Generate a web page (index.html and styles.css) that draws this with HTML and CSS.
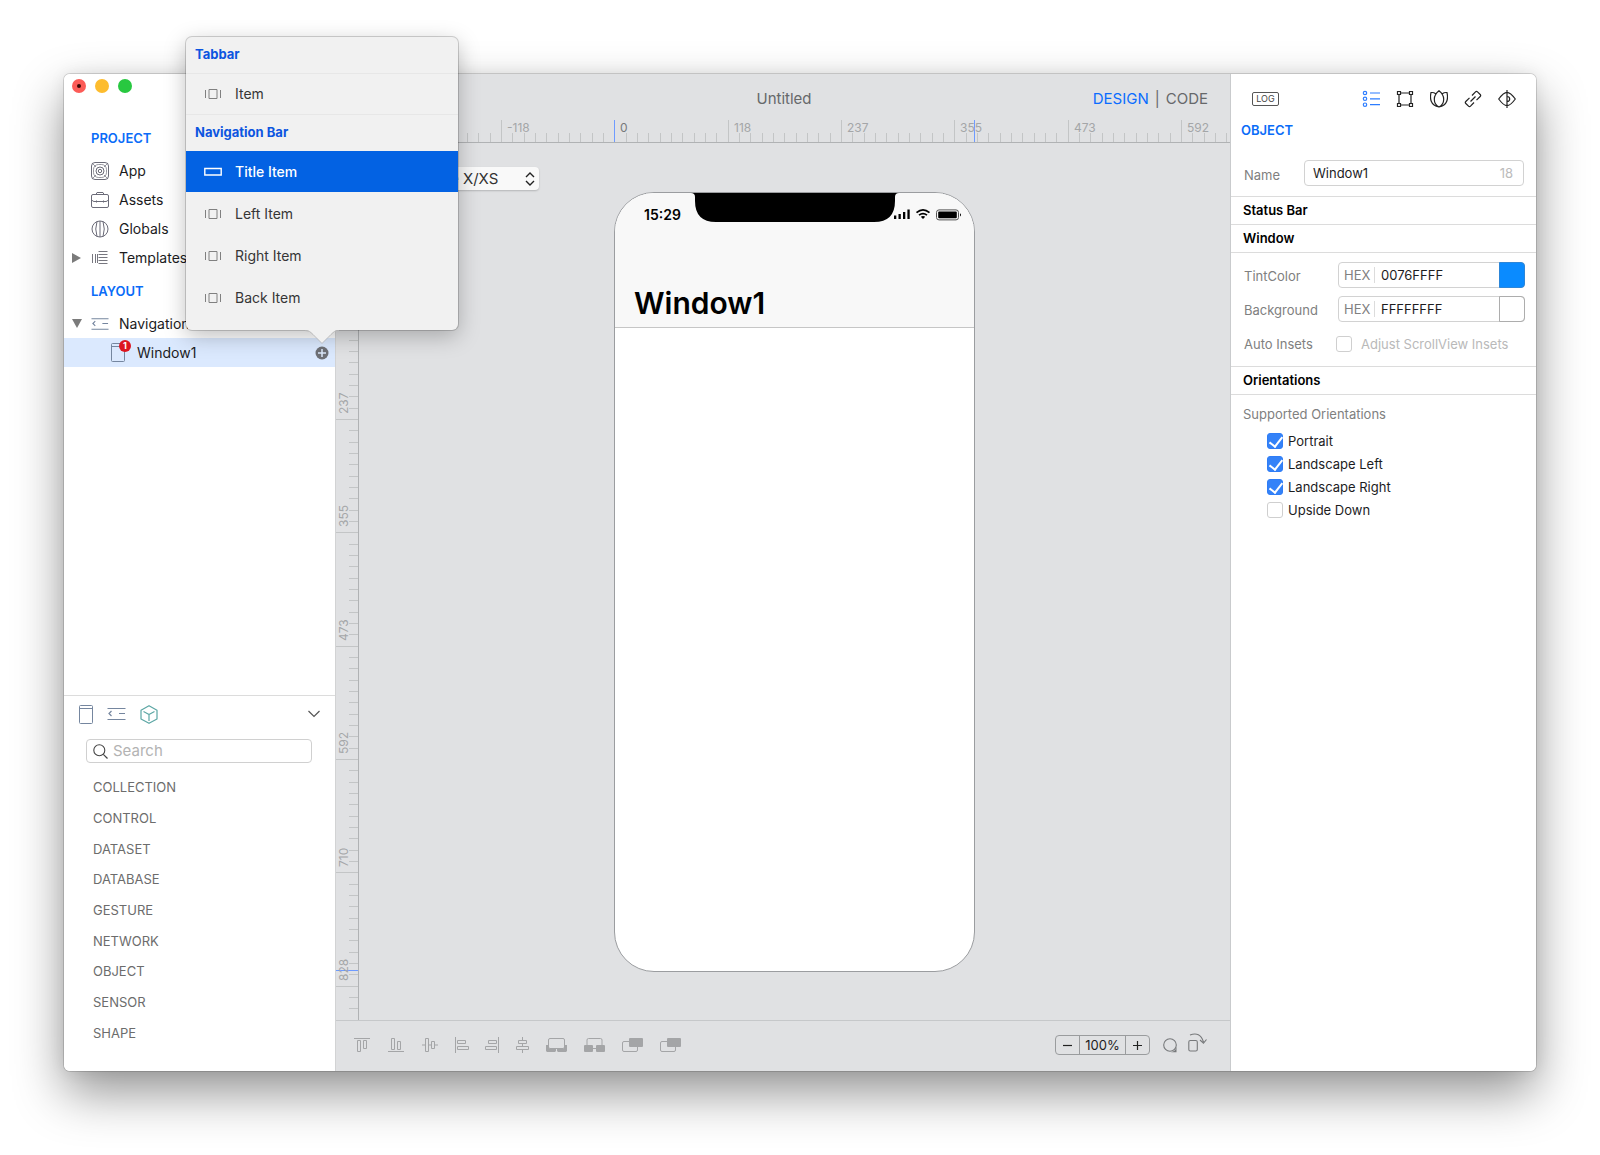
FILE: index.html
```html
<!DOCTYPE html>
<html lang="en">
<head>
<meta charset="utf-8">
<title>Untitled</title>
<link rel="stylesheet" href="styles.css">
</head>
<body>
<svg class="defs" width="0" height="0" aria-hidden="true">
  <defs>
    <symbol id="i-item" viewBox="0 0 18 12"><path d="M1.500 2v8M16.500 2v8M5 1.500h8v9H5z" fill="none" stroke="currentColor"/></symbol>
    <symbol id="i-nav" viewBox="0 0 19 14"><path d="M.5 1.500h18M.5 12.500h18M4.500 4L2 6.500l2.500 2.500M12 6.500h6" fill="none" stroke="currentColor" stroke-width="1.200"/></symbol>
    <symbol id="i-window" viewBox="0 0 14 19"><path d="M.5 1.500q0-1 1-1h11q1 0 1 1v16q0 1-1 1h-11q-1 0-1-1zM.5 3.500h13" fill="none" stroke="currentColor"/></symbol>
  </defs>
</svg>

<main class="app">
  <aside class="sidebar">
    <div class="lights">
      <button class="light light-close" aria-label="Close"></button>
      <button class="light light-min" aria-label="Minimize"></button>
      <button class="light light-max" aria-label="Zoom"></button>
    </div>

    <nav class="tree">
      <h2 class="heading">PROJECT</h2>
      <ul class="rows rows-project">
        <li class="row"><span class="arrow"></span>
          <svg class="row-icon" viewBox="0 0 18 18"><g fill="none" stroke="#6b6b78"><rect x=".5" y=".5" width="17" height="17" rx="3.500"/><rect x="2.500" y="2.500" width="13" height="13" rx="5" stroke-width=".7"/><circle cx="9" cy="9" r="4"/><circle cx="9" cy="9" r="1.700"/><path d="M1 1l4 4M17 1l-4 4M1 17l4-4M17 17l-4-4" stroke-width=".7"/></g></svg>
          <span>App</span></li>
        <li class="row"><span class="arrow"></span>
          <svg class="row-icon" viewBox="0 0 18 18"><g fill="none" stroke="#6b6b78"><rect x=".5" y="3.500" width="17" height="13" rx="1.500"/><path d="M5 3.500L6 1.500h6l1 2M.5 8.500q1 2 2.500 2h12q1.500 0 2.500-2M5.500 9.500v2M12.500 9.500v2"/></g></svg>
          <span>Assets</span></li>
        <li class="row"><span class="arrow"></span>
          <svg class="row-icon" viewBox="0 0 18 18"><g fill="none" stroke="#6b6b78"><circle cx="9" cy="9" r="8"/><path d="M9 1v16M6 1.500q-2.500 7.500 0 15M12 1.500q2.500 7.500 0 15"/></g></svg>
          <span>Globals</span></li>
        <li class="row"><span class="arrow"><svg width="9" height="10" viewBox="0 0 9 10"><path d="M0 0l9 5-9 5z" fill="#7b7b7b"/></svg></span>
          <svg class="row-icon" viewBox="0 0 18 18"><path d="M1.500 5v9M4.500 5v9M7.500 2.500h9M7.500 5.500h9M7.500 8.500h9M7.500 11.500h9M7.500 14.500h9M6.500 5v9" fill="none" stroke="#77777f"/></svg>
          <span>Templates</span></li>
      </ul>
      <h2 class="heading heading-layout">LAYOUT</h2>
      <ul class="rows">
        <li class="row"><span class="arrow"><svg width="10" height="9" viewBox="0 0 10 9"><path d="M0 0h10L5 9z" fill="#7b7b7b"/></svg></span>
          <svg class="row-icon slate" viewBox="0 0 19 18"><use href="#i-nav" y="2" width="19" height="14"/></svg>
          <span>Navigation</span></li>
        <li class="row row-child selected">
          <span class="badge-host"><svg class="slate" width="14" height="19"><use href="#i-window" width="14" height="19"/></svg><span class="badge">1</span></span>
          <span>Window1</span>
          <button class="add" aria-label="Add item"><svg width="14" height="14" viewBox="0 0 14 14"><circle cx="7" cy="7" r="6.500" fill="#6e7076"/><path d="M7 3v8M3 7h8" stroke="#dde9fc" stroke-width="1.500"/></svg></button>
          <div class="popover">
            <h3 class="pop-heading">Tabbar</h3>
            <button class="pop-item pop-ruled"><svg width="18" height="12"><use href="#i-item"/></svg>Item</button>
            <h3 class="pop-heading">Navigation Bar</h3>
            <button class="pop-item active"><svg width="18" height="12" viewBox="0 0 18 12"><path d="M.8 2.500h16.400v6.500H.8z" fill="none" stroke="#fff" stroke-width="1.400"/></svg>Title Item</button>
            <button class="pop-item"><svg width="18" height="12"><use href="#i-item"/></svg>Left Item</button>
            <button class="pop-item"><svg width="18" height="12"><use href="#i-item"/></svg>Right Item</button>
            <button class="pop-item"><svg width="18" height="12"><use href="#i-item"/></svg>Back Item</button>
            <svg class="pop-arrow" width="34" height="15" viewBox="0 0 34 15"><path d="M0 0v1q5 0 8 4l9 9 9-9q3-4 8-4V0z" fill="#f1f1f1"/><path d="M0 1.500q5 0 8 4l9 9 9-9q3-4 8-4" fill="none" stroke="#b9b9b9" stroke-width=".8"/></svg>
          </div>
        </li>
      </ul>
    </nav>

    <section class="library">
      <div class="lib-tabs">
        <button class="slate" aria-label="Windows"><svg width="14" height="19"><use href="#i-window"/></svg></button>
        <button class="slate" aria-label="Navigation"><svg width="19" height="14"><use href="#i-nav"/></svg></button>
        <button aria-label="Objects"><svg width="18" height="19" viewBox="0 0 18 19"><path d="M9 .7l8 4.500v8.800l-8 4.300-8-4.300V5.200zM3.500 6.500L9 9.500l5.500-3M9 9.500V16" fill="none" stroke="#5ba6a4" stroke-width="1.200" stroke-linejoin="round"/></svg></button>
        <button class="lib-toggle" aria-label="Collapse"><svg width="12" height="8" viewBox="0 0 12 8"><path d="M.5 1L6 6.500 11.500 1" fill="none" stroke="#555" stroke-width="1.200"/></svg></button>
      </div>
      <label class="search"><svg width="15" height="15" viewBox="0 0 15 15"><circle cx="6.300" cy="6.300" r="5.500" fill="none" stroke="#444" stroke-width="1.100"/><path d="M10.300 10.300l4.200 4.200" stroke="#444" stroke-width="1.200"/></svg>
        <input type="search" placeholder="Search" aria-label="Search"></label>
      <ul class="categories">
        <li>COLLECTION</li><li>CONTROL</li><li>DATASET</li><li>DATABASE</li><li>GESTURE</li><li>NETWORK</li><li>OBJECT</li><li>SENSOR</li><li>SHAPE</li>
      </ul>
    </section>
  </aside>

  <section class="editor">
    <header class="titlebar">
      <span></span>
      <h1 class="doc-title">Untitled</h1>
      <div class="modes"><a class="mode on" href="#design">DESIGN</a><span>|</span><a class="mode" href="#code">CODE</a></div>
    </header>
    <div class="ruler-h">
      <svg class="ticks" aria-hidden="true">
        <pattern id="ph" x="278" y="0" width="340" height="22" patternUnits="userSpaceOnUse"><path fill="#c3c5c6" d="M0 0h1v22h-1zM12 13h1v9h-1zM23 13h1v9h-1zM34 13h1v9h-1zM46 13h1v9h-1zM57 13h1v9h-1zM68 13h1v9h-1zM80 13h1v9h-1zM91 13h1v9h-1zM102 13h1v9h-1zM114 0h1v22h-1zM125 13h1v9h-1zM136 13h1v9h-1zM148 13h1v9h-1zM159 13h1v9h-1zM170 13h1v9h-1zM182 13h1v9h-1zM193 13h1v9h-1zM204 13h1v9h-1zM216 13h1v9h-1zM227 0h1v22h-1zM238 13h1v9h-1zM250 13h1v9h-1zM261 13h1v9h-1zM272 13h1v9h-1zM284 13h1v9h-1zM295 13h1v9h-1zM306 13h1v9h-1zM318 13h1v9h-1zM329 13h1v9h-1z"/></pattern>
        <rect width="100%" height="22" fill="url(#ph)"/>
        <path d="M278 0h1v22h-1zM638 0h1v22h-1z" fill="#6f9bff"/>
      </svg>
      <div class="labels-h"><span>-118</span><span class="origin">0</span><span>118</span><span>237</span><span>355</span><span>473</span><span>592</span></div>
    </div>
    <div class="stage">
      <div class="ruler-v">
        <svg class="ticks" aria-hidden="true">
          <pattern id="pv" x="0" y="49" width="22" height="340" patternUnits="userSpaceOnUse"><path fill="#c3c5c6" d="M0 0v1h22v-1zM13 12v1h9v-1zM13 23v1h9v-1zM13 34v1h9v-1zM13 46v1h9v-1zM13 57v1h9v-1zM13 68v1h9v-1zM13 80v1h9v-1zM13 91v1h9v-1zM13 102v1h9v-1zM0 114v1h22v-1zM13 125v1h9v-1zM13 136v1h9v-1zM13 148v1h9v-1zM13 159v1h9v-1zM13 170v1h9v-1zM13 182v1h9v-1zM13 193v1h9v-1zM13 204v1h9v-1zM13 216v1h9v-1zM0 227v1h22v-1zM13 238v1h9v-1zM13 250v1h9v-1zM13 261v1h9v-1zM13 272v1h9v-1zM13 284v1h9v-1zM13 295v1h9v-1zM13 306v1h9v-1zM13 318v1h9v-1zM13 329v1h9v-1z"/></pattern>
          <rect width="22" height="100%" fill="url(#pv)"/>
          <path d="M0 827h22v1H0z" fill="#6f9bff"/>
        </svg>
        <div class="labels-v"><span>237</span><span>355</span><span>473</span><span>592</span><span>710</span><span>828</span></div>
      </div>
      <div class="canvas">
        <div class="device">
          <select aria-label="Device"><option>iPhone X/XS</option></select>
          <svg width="10" height="14" viewBox="0 0 10 14"><path d="M1 5l4-4 4 4M1 9l4 4 4-4" fill="none" stroke="#222" stroke-width="1.400"/></svg>
        </div>
        <div class="phone">
          <div class="navbar">
            <div class="status">
              <span class="clock">15:29</span>
              <svg class="notch" width="208" height="30" viewBox="0 0 208 30"><path d="M0 0h208q-4 0-4 4v4q0 21-21 21H25Q4 29 4 8V4q0-4-4-4z"/></svg>
              <svg class="signals" width="68" height="12" viewBox="0 0 68 12"><path d="M0 6.500h2.300V10H0zM4.500 5h2.300v5H4.500zM9 3h2.300v7H9zM13.400.5h2.300V10h-2.300z"/><path d="M22.500 3.700q6.500-5.500 13 0M25 6.200q4-3.200 8 0" fill="none" stroke="#000" stroke-width="1.700"/><path d="M26.800 7.800q2.200-1.600 4.400 0L29 10z"/><rect x="42.500" y=".9" width="22" height="10" rx="2.500" fill="none" stroke="#555"/><rect x="44.200" y="2.600" width="18.600" height="6.600" rx="1"/><path d="M66 4.200q2 1.600 0 3.200z"/></svg>
            </div>
            <p class="big-title">Window1</p>
          </div>
        </div>
      </div>
    </div>
    <footer class="footer">
      <div class="tools">
        <div class="tool-group g1">
          <button aria-label="Align top"><svg viewBox="0 0 16 16"><path d="M0 1.500h16M3.500 3.500h3v11h-3zM9.500 3.500h3v8h-3z"/></svg></button>
          <button aria-label="Align bottom"><svg viewBox="0 0 16 16"><path d="M0 14.500h16M3.500 1.500h3v11h-3zM9.500 4.500h3v8h-3z"/></svg></button>
          <button aria-label="Align middle"><svg viewBox="0 0 16 16"><path d="M0 8h3.500M6.500 8h3M12.500 8H16M3.500 1.500h3v13h-3zM9.500 4.500h3v7h-3z"/></svg></button>
        </div>
        <div class="tool-group g2">
          <button aria-label="Align left"><svg viewBox="0 0 16 16"><path d="M1.500 0v16M3.500 3.500h8v3h-8zM3.500 9.500h11v3h-11z"/></svg></button>
          <button aria-label="Align right"><svg viewBox="0 0 16 16"><path d="M14.500 0v16M4.500 3.500h8v3h-8zM1.500 9.500h11v3h-11z"/></svg></button>
          <button aria-label="Align center"><svg viewBox="0 0 16 16"><path d="M8.500 0v3.500M8.500 6.500v3M8.500 12.500V16M4.500 3.500h8v3h-8zM2.500 9.500h12v3h-12z"/></svg></button>
        </div>
        <div class="tool-group g3">
          <button aria-label="Bring to front"><svg viewBox="0 0 21 16"><path class="solid" d="M0 8h3v4h7v2l-1 1H1l-1-1zM21 8h-3v4h-7v2l1 1h8l1-1z"/><rect x="2.500" y="1.500" width="16" height="10" rx="1.500"/></svg></button>
          <button aria-label="Send to back"><svg viewBox="0 0 21 16"><path d="M3 8V3q0-1.500 1.500-1.500h12Q18 1.500 18 3v5M9 11.500h3"/><rect class="solid" y="8" width="9" height="7" rx="1"/><rect class="solid" x="12" y="8" width="9" height="7" rx="1"/></svg></button>
          <button aria-label="Bring forward"><svg viewBox="0 0 21 16"><rect x=".5" y="4.500" width="15" height="10" rx="1.500"/><rect class="solid" x="7" y="1" width="14" height="9" rx="1"/></svg></button>
          <button aria-label="Send backward"><svg viewBox="0 0 21 16"><rect x=".5" y="4.500" width="15" height="10" rx="1.500"/><rect class="solid" x="7" y="1" width="14" height="9" rx="1"/></svg></button>
        </div>
      </div>
      <div class="zoom">
        <button aria-label="Zoom out"><svg width="9" height="9"><path d="M0 4.500h9" stroke="#222" stroke-width="1.200"/></svg></button>
        <output>100%</output>
        <button aria-label="Zoom in"><svg width="9" height="9"><path d="M0 4.500h9M4.500 0v9" stroke="#222" stroke-width="1.200"/></svg></button>
      </div>
      <button class="foot-btn" aria-label="Appearance"><svg width="15" height="15" viewBox="0 0 15 15"><circle cx="7" cy="7" r="6.300" fill="none" stroke="#77797b" stroke-width="1.100"/><path d="M13.500 9v5.200H8q4.500-.7 5.500-5.200z" fill="#77797b"/></svg></button>
      <button class="foot-btn" aria-label="Rotate device"><svg width="20" height="20" viewBox="0 0 20 20"><g fill="none" stroke="#77797b" stroke-width="1.100"><rect x=".8" y="8.500" width="8.500" height="10.500" rx="1.500"/><path d="M2 3Q12-1 15.500 10M12 8l3.500 3.200L18.500 7.500"/></g></svg></button>
    </footer>
  </section>

  <aside class="inspector">
    <div class="insp-bar">
      <button class="log">LOG</button>
      <div class="insp-tabs">
        <button class="insp-tab on" aria-label="Attributes"><svg viewBox="0 0 18 18"><circle cx="3" cy="3" r="1.700"/><circle cx="3" cy="8.800" r="1.700"/><circle cx="3" cy="14.700" r="1.700"/><path d="M8 3h10M8 8.800h10M8 14.700h10"/></svg></button>
        <button class="insp-tab" aria-label="Layout"><svg viewBox="0 0 18 18"><path d="M1.500 1.500h3v3h-3zM13.500 1.500h3v3h-3zM1.500 13.500h3v3h-3zM13.500 13.500h3v3h-3zM4.500 3h9M4.500 15h9M3 4.500v9M15 4.500v9"/></svg></button>
        <button class="insp-tab" aria-label="Style"><svg viewBox="0 0 18 18"><path d="M9 .8C5.500 3.500 4.300 6.500 4.300 9.300S6 15.500 9 17c3-1.500 4.700-4.900 4.700-7.700S12.500 3.500 9 .8zM5.700 3.700Q3.500 2.200 1 2.600C-.2 8 .2 15.500 9 17M12.300 3.700Q14.500 2.200 17 2.600C18.200 8 17.800 15.500 9 17"/></svg></button>
        <button class="insp-tab" aria-label="Connections"><svg viewBox="0 0 18 18"><path d="M8 5.500l3.500-3.700q1-1 2 0l2.700 2.700q1 1 0 2L12.500 10.200M10 12.500l-3.500 3.700q-1 1-2 0L1.800 13.500q-1-1 0-2L5.500 7.800M6.500 11.500l5-5"/></svg></button>
        <button class="insp-tab" aria-label="Preview"><svg viewBox="0 0 18 18"><path d="M.7 9C4 4.500 6.500 2.300 9 2.300S14 4.500 17.300 9C14 13.500 11.500 15.700 9 15.700S4 13.500.7 9zM9 0v18M9 6.500q2.700 0 2.700 2.500T9 11.500"/></svg></button>
      </div>
    </div>
    <h2 class="heading insp-heading">OBJECT</h2>
    <div class="field name-field">
      <label for="obj-name">Name</label>
      <div class="box"><input id="obj-name" type="text" value="Window1"><span class="count">18</span></div>
    </div>
    <h3 class="group">Status Bar</h3>
    <h3 class="group">Window</h3>
    <div class="form">
      <div class="field">
        <label for="tint">TintColor</label>
        <div class="box color"><span class="hex">HEX</span><input id="tint" type="text" value="0076FFFF"><button class="swatch swatch-tint" aria-label="Pick tint color"></button></div>
      </div>
      <div class="field">
        <label for="bg">Background</label>
        <div class="box color"><span class="hex">HEX</span><input id="bg" type="text" value="FFFFFFFF"><button class="swatch" aria-label="Pick background color"></button></div>
      </div>
      <div class="field insets">
        <span>Auto Insets</span>
        <label class="check muted"><input type="checkbox" disabled>Adjust ScrollView Insets</label>
      </div>
    </div>
    <h3 class="group">Orientations</h3>
    <fieldset class="orients">
      <legend>Supported Orientations</legend>
      <label class="check"><input type="checkbox" checked>Portrait</label>
      <label class="check"><input type="checkbox" checked>Landscape Left</label>
      <label class="check"><input type="checkbox" checked>Landscape Right</label>
      <label class="check"><input type="checkbox">Upside Down</label>
    </fieldset>
  </aside>
</main>
</body>
</html>
```
FILE: styles.css
```css
* { box-sizing: border-box; }

body {
  margin: 0;
  min-height: 100vh;
  padding: 74px 64px 84px;
  display: flex;
  background: #fff;
  font-family: Inter, "Liberation Sans", sans-serif;
  font-size: 13px;
  line-height: 16px;
  color: #1c1c1e;
}

h1, h2, h3, p, ul, fieldset { margin: 0; padding: 0; border: 0; font-size: inherit; }
ul { list-style: none; }
button, input, select, output { font: inherit; color: inherit; }
button { padding: 0; border: 0; background: none; display: flex; align-items: center; justify-content: center; }
input { min-width: 0; padding: 0; border: 0; outline: 0; background: none; }
a { color: inherit; text-decoration: none; }
svg { display: block; flex: none; }
.defs { position: absolute; }
.slate { color: #75869f; }

.app {
  flex: 1;
  display: grid;
  grid-template-columns: 272px 1fr 306px;
  border-radius: 6px;
  box-shadow: 0 0 0 1px rgba(0, 0, 0, .14), 0 22px 50px rgba(0, 0, 0, .42), 0 0 16px rgba(0, 0, 0, .08);
}

/* Sidebar */
.sidebar {
  display: flex;
  flex-direction: column;
  background: #fff;
  border-right: 1px solid #d2d3d4;
  border-radius: 6px 0 0 6px;
}
.lights { display: flex; gap: 9px; padding: 5px 8px; height: 56px; }
.light { width: 14px; height: 14px; border-radius: 50%; }
.light-close { background: #fc5b57; }
.light-close::after { content: ""; width: 4px; height: 4px; border-radius: 50%; background: #3a0805; }
.light-min { background: #fdbc2e; }
.light-max { background: #28c840; }

.tree { flex: 1; }
.heading { padding-left: 27px; font-weight: 600; color: #0a6cf8; }
.rows { padding-top: 10px; font-size: 14px; }
.rows-project { height: 127px; display: grid; align-content: space-between; }
.heading-layout { padding-top: 10px; }
.row { height: 29px; display: flex; align-items: center; gap: 10px; }
.arrow { width: 27px; margin-right: -10px; padding-left: 8px; display: flex; }
.row-icon { width: 18px; height: 18px; }
.row-child { position: relative; padding: 0 6px 0 47px; gap: 12px; }
.selected { background: #dbe9fe; }
.badge-host { position: relative; }
.badge {
  position: absolute;
  top: -3px;
  right: -6px;
  width: 12px;
  height: 12px;
  border-radius: 50%;
  background: #dd1620;
  color: #fff;
  font-size: 9px;
  line-height: 12px;
  font-weight: 700;
  text-align: center;
}
.add { margin-left: auto; }

.popover {
  position: absolute;
  left: 122px;
  bottom: 37px;
  z-index: 2;
  width: 272px;
  padding-bottom: 11px;
  background: #f1f1f1;
  border-radius: 6px;
  box-shadow: 0 0 0 1px rgba(0, 0, 0, .17), 0 6px 22px rgba(0, 0, 0, .26);
}
.pop-heading { height: 36px; padding: 9px; font-size: 13px; font-weight: 700; color: #0c55e0; }
.pop-item { width: 100%; height: 42px; padding-left: 18px; gap: 13px; justify-content: flex-start; color: #363636; }
.pop-item svg { color: #808080; }
.pop-ruled { border-top: 1px solid #e7e7e7; border-bottom: 1px solid #e7e7e7; }
.pop-item.active { height: 41px; margin-bottom: 1px; background: #0362e3; color: #fff; font-weight: 500; }
.pop-arrow { position: absolute; left: 119px; top: 100%; margin-top: -1px; }

.library { height: 376px; display: flex; flex-direction: column; border-top: 1px solid #dcdcdc; padding-bottom: 23px; }
.lib-tabs { height: 43px; display: flex; align-items: center; gap: 14px; padding: 0 15px 7px; }
.lib-toggle { margin-left: auto; }
.search { height: 24px; margin: 0 23px 9px 22px; padding: 0 6px; display: flex; align-items: center; gap: 5px; border: 1px solid #d0d0d0; border-radius: 4px; font-size: 15px; }
.search input { flex: 1; -webkit-appearance: none; }
.search input::placeholder { color: #b3b3b3; opacity: 1; }
.categories { flex: 1; display: grid; grid-auto-rows: 1fr; align-items: center; padding-left: 29px; color: #6c6c6c; }

/* Editor */
.editor { display: flex; flex-direction: column; min-width: 0; background: #e0e1e3; }
.titlebar { height: 46px; display: grid; grid-template-columns: 1fr auto 1fr; align-items: center; padding: 4px 22px 0 24px; font-size: 15px; color: #66686a; }
.doc-title { font-size: 15px; font-weight: 400; }
.modes { display: flex; justify-content: flex-end; gap: 6px; }
.on { color: #0a6cff; }

.ruler-h { height: 23px; position: relative; border-bottom: 1px solid #b0b2b4; font-size: 12px; color: #a4a6a8; }
.ticks { position: absolute; inset: 0; width: 100%; height: 100%; }
.labels-h { position: relative; display: grid; grid-template-columns: 113px 114px 113px 113px 114px 113px auto; padding-left: 165px; }
.labels-h span { padding-left: 6px; }
.origin { color: #77797b; }

.stage { flex: 1; display: flex; }
.ruler-v { position: relative; width: 23px; border-right: 1px solid #b0b2b4; font-size: 12px; color: #a4a6a8; }
.labels-v { position: relative; display: grid; grid-template-rows: 113px 113px 114px 113px 113px 114px; padding-top: 163px; }
.labels-v span { writing-mode: vertical-rl; transform: rotate(180deg); padding-top: 5px; width: 15px; line-height: 15px; }

.canvas { flex: 1; display: flex; flex-direction: column; padding-top: 24px; padding-bottom: 48px; }
.device { position: relative; width: 141px; height: 23px; margin: 0 0 2px 39px; display: flex; align-items: center; background: #f9f9f9; border-radius: 4px; box-shadow: 0 1px 2px rgba(0, 0, 0, .2); font-size: 15px; color: #333; }
.device select { width: 100%; height: 23px; padding: 0 0 0 12px; border: 0; background: none; appearance: none; }
.device svg { position: absolute; right: 4px; }
.phone { flex: 1; align-self: center; width: 361px; background: #fff; border: 1px solid #9b9da0; border-radius: 40px; overflow: hidden; }
.navbar { height: 135px; display: flex; flex-direction: column; justify-content: space-between; background: #f8f8f8; border-bottom: 1px solid #c6c6c6; color: #000; }
.status { height: 31px; display: flex; justify-content: space-between; padding: 0 12px 0 29px; }
.clock { width: 46px; padding-top: 14px; font-size: 14px; font-weight: 600; }
.signals { margin-top: 16px; margin-left: -6px; }
.big-title { padding: 0 19px 4px; font-size: 30px; line-height: 40px; font-weight: 600; }

.footer { height: 51px; display: flex; align-items: center; padding: 0 22px 2px 9px; border-top: 1px solid #c6c8ca; }
.tools, .tool-group { display: flex; }
.tools { margin-right: auto; }
.tools svg { height: 16px; width: 16px; fill: none; stroke: #a4a5a7; }
.tools .solid { fill: #a4a5a7; stroke: none; }
.g1 button { width: 34px; }
.g2 button { width: 30px; }
.tools .g3 button { width: 38px; }
.tools .g3 svg { width: 21px; }
.zoom { display: grid; grid-template-columns: 23px 47px 23px; height: 20px; margin-right: 13px; border: 1px solid #9a9c9e; border-radius: 4px; text-align: center; line-height: 18px; }
.zoom output { border: solid #9a9c9e; border-width: 0 1px; }
.foot-btn + .foot-btn { margin: -6px 0 0 10px; }

/* Inspector */
.inspector { background: #fff; border-left: 1px solid #c9cbcd; border-radius: 0 6px 6px 0; }
.insp-bar { display: flex; align-items: center; justify-content: space-between; height: 48px; padding: 2px 20px 0 21px; }
.log { width: 27px; height: 14px; border: 1px solid #555; border-radius: 2px; font-size: 9px; line-height: 12px; color: #444; }
.insp-tabs { display: flex; gap: 16px; }
.insp-tab svg { width: 18px; height: 18px; fill: none; stroke: #222; stroke-width: 1.2; }
.insp-tab.on svg { stroke: #2d7dff; }
.insp-heading { padding-left: 10px; height: 38px; }
.field { display: flex; align-items: center; justify-content: space-between; padding: 0 12px 0 13px; color: #808080; }
.field > label:first-child, .field > span { padding-top: 2px; }
.name-field { height: 36px; align-items: flex-start; line-height: 26px; }
.box { height: 26px; width: 220px; display: flex; align-items: center; padding: 0 10px 0 8px; border: 1px solid #d2d2d2; border-radius: 4px; }
.box input { flex: 1; color: #1c1c1e; line-height: 24px; }
.count { color: #bbb; }
.group { height: 28px; padding: 5px 12px; border-top: 1px solid #dcdcdc; font-weight: 600; color: #000; }
.form { border-top: 1px solid #dcdcdc; padding: 9px 0 10px; display: grid; gap: 8px; }
.form .field { padding-right: 11px; }
.color { width: 187px; padding: 0 0 0 5px; }
.hex { width: 31px; border-right: 1px solid #dcdcdc; margin-right: 6px; }
.swatch { width: 26px; height: 26px; margin-right: -1px; border: 1px solid #adadad; border-radius: 0 4px 4px 0; }
.swatch-tint { background: #0a8bff; border-color: #2d86d8; }
.insets { height: 26px; }
.check { display: flex; align-items: center; gap: 5px; color: #1c1c1e; }
.muted { color: #b9b9b9; gap: 9px; width: 189px; padding-top: 2px; }
.check input { appearance: none; width: 16px; height: 16px; margin: 0; flex: none; border: 1px solid #cfcfcf; border-radius: 3px; background: #fff; position: relative; }
.check input:checked { border-color: #2f7df6; background: #3482f8; }
.check input:checked::after { content: ""; position: absolute; left: 4px; top: 0; width: 6px; height: 11px; border: solid #fff; border-width: 0 2px 2px 0; transform: rotate(38deg); }
.orients { border-top: 1px solid #dcdcdc; padding: 0 0 0 36px; display: grid; gap: 7px; }
.orients legend { float: left; margin: 11px 0 4px -24px; padding: 0; color: #808080; }
.orients .check { clear: both; }
```
